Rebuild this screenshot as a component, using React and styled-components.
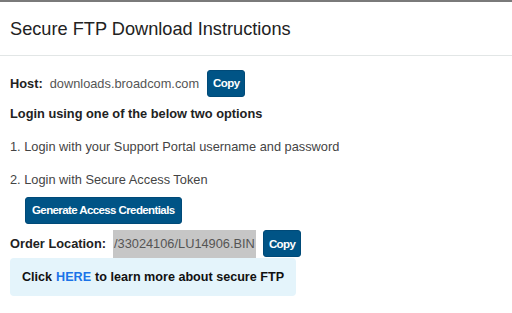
import styled, { createGlobalStyle } from "styled-components";

const GlobalStyle = createGlobalStyle`
  html, body { margin: 0; padding: 0; background: #fff; }
  body { font-family: "Liberation Sans", Arial, sans-serif; }
`;

const Panel = styled.div`
  width: 512px;
  height: 313px;
  border-top: 2px solid #7a7a7a;
  box-sizing: border-box;
  background: #fff;
`;

const Header = styled.div`
  height: 51px;
  padding: 2px 10px 0;
  display: flex;
  align-items: center;
  border-bottom: 1px solid #e2e6e6;
  font-size: 18.2px;
  color: #222;
`;

const Body = styled.div`
  padding: 14px 10px 0;
  display: flex;
  flex-direction: column;
  font-size: 12.8px;
  color: #222;
`;

const Row = styled.div`
  display: flex;
  align-items: center;
  height: ${({ h }) => h || 26}px;
  margin-top: ${({ mt }) => mt || 0}px;
  padding-left: ${({ indent }) => indent || 0}px;
`;

const Label = styled.span`
  font-weight: bold;
  margin-right: 7px;
`;

const Value = styled.span`
  color: #555;
  margin-right: 8px;
`;

const Selected = styled.span`
  color: #555;
  background: #c6c6c6;
  padding: 6px 1px 7px;
  margin-right: 7px;
`;

const Step = styled.div`
  color: #444;
`;

const Button = styled.button`
  font-family: "Liberation Sans", Arial, sans-serif;
  font-size: 11.5px;
  letter-spacing: -0.6px;
  font-weight: bold;
  color: #fff;
  background: #005486;
  border: 1px solid #004a78;
  border-radius: 3px;
  height: 27px;
  padding: 0 ${({ px }) => px || 6}px;
  cursor: pointer;
`;

const Info = styled.div`
  margin-top: 1px;
  width: 286px;
  height: 38px;
  box-sizing: border-box;
  background: #e4f4fb;
  border-radius: 4px;
  display: flex;
  align-items: center;
  padding-left: 12px;
  font-weight: bold;
  font-size: 12.6px;
  color: #111;
`;

const Link = styled.a`
  color: #1a73e8;
  text-decoration: none;
  margin: 0 4px;
`;

export default function App() {
  return (
    <>
      <GlobalStyle />
      <Panel>
        <Header>Secure FTP Download Instructions</Header>
        <Body>
          <Row>
            <Label>Host:</Label>
            <Value>downloads.broadcom.com</Value>
            <Button px={5}>Copy</Button>
          </Row>
          <Row h={18} mt={8}>
            <Label>Login using one of the below two options</Label>
          </Row>
          <Row h={18} mt={15}>
            <Step>1. Login with your Support Portal username and password</Step>
          </Row>
          <Row h={18} mt={15}>
            <Step>2. Login with Secure Access Token</Step>
          </Row>
          <Row indent={15} mt={9}>
            <Button>Generate Access Credentials</Button>
          </Row>
          <Row h={27} mt={7}>
            <Label>Order Location:</Label>
            <Selected>/33024106/LU14906.BIN</Selected>
            <Button px={5}>Copy</Button>
          </Row>
          <Info>
            Click<Link href="#">HERE</Link>to learn more about secure FTP
          </Info>
        </Body>
      </Panel>
    </>
  );
}
